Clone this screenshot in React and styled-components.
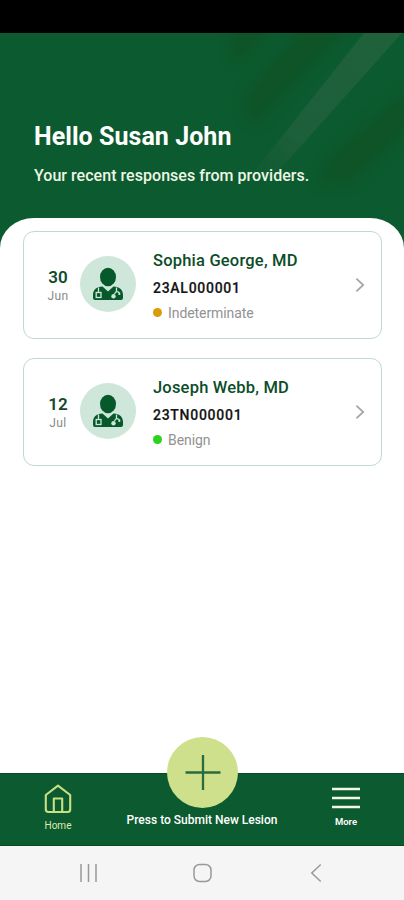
import React from "react";
import styled, { createGlobalStyle } from "styled-components";

const GlobalStyle = createGlobalStyle`
    * {
        box-sizing: border-box;
    }
    body {
        margin: 0;
        background: #fff;
        font-family: Roboto, "Liberation Sans", sans-serif;
    }
    p, h1, h2 {
        margin: 0;
    }
`;

const Screen = styled.div`
    display: flex;
    flex-direction: column;
    width: 404px;
    height: 900px;
    overflow: hidden;
    background: #0c5a2f;
`;

const StatusBar = styled.div`
    flex: none;
    height: 33px;
    background: #000;
`;

const Header = styled.header`
    position: relative;
    flex: none;
    height: 185px;
    padding: 89px 34px 0;
    color: #fff;
`;

const Streaks = styled.svg`
    position: absolute;
    top: 0;
    right: 0;
`;

const Greeting = styled.h1`
    position: relative;
    font-size: 25px;
    line-height: 30px;
    font-weight: 700;
    letter-spacing: 0.05px;
    white-space: nowrap;
`;

const Subtitle = styled.p`
    position: relative;
    margin-top: 14px;
    font-size: 16px;
    line-height: 20px;
    font-weight: 500;
    letter-spacing: 0.04px;
    color: #eef6e6;
    white-space: nowrap;
`;

const Content = styled.main`
    flex: 1;
    display: flex;
    flex-direction: column;
    gap: 19px;
    padding: 13px 22px 0 23px;
    background: #fff;
    border-radius: 34px 34px 0 0 / 30px 30px 0 0;
`;

const Card = styled.article`
    display: flex;
    align-items: center;
    height: 108px;
    padding: 0 16px 0 14px;
    border: 1.5px solid #bddbd0;
    border-radius: 11px;
`;

const DateBox = styled.div`
    width: 40px;
    margin-top: 2px;
    text-align: center;
`;

const Day = styled.p`
    font-size: 17px;
    line-height: 20px;
    font-weight: 600;
    color: #124a2c;
`;

const Month = styled.p`
    font-size: 12px;
    line-height: 19px;
    letter-spacing: 0.4px;
    color: #858a87;
`;

const Avatar = styled.div`
    display: flex;
    align-items: center;
    justify-content: center;
    width: 56px;
    height: 56px;
    margin: -2px 17px 0 2px;
    border-radius: 50%;
    background: #cfe6da;
`;

const Info = styled.div`
    flex: 1;
    margin-top: 2px;
    white-space: nowrap;
`;

const Name = styled.h2`
    font-size: 16.5px;
    line-height: 24px;
    font-weight: 500;
    letter-spacing: 0.2px;
    color: #0b4d28;
`;

const CaseId = styled.p`
    margin-top: 3px;
    font-size: 14px;
    line-height: 24px;
    font-weight: 500;
    letter-spacing: 0.72px;
    color: #151515;
    -webkit-text-stroke: 0.2px #151515;
`;

const Status = styled.p`
    display: flex;
    align-items: center;
    gap: 6px;
    margin-top: 2px;
    font-size: 14px;
    line-height: 22px;
    letter-spacing: -0.08px;
    color: #929292;

    &::before {
        content: "";
        width: 9px;
        height: 9px;
        margin-top: -1px;
        border-radius: 50%;
        background: ${(props) => props.$dot};
    }
`;

const TabBar = styled.nav`
    flex: none;
    display: grid;
    grid-template-columns: 116px 172px 116px;
    height: 73px;
    border-top: 1px solid #064a1f;
    border-bottom: 1px solid #064a1f;
    background: #0c5a2f;
`;

const Tab = styled.a`
    display: flex;
    flex-direction: column;
    align-items: center;
    padding-top: ${(props) => props.$top};
    font-size: ${(props) => props.$size};
    line-height: 14px;
    font-weight: ${(props) => props.$weight || 400};
    color: ${(props) => props.$color || "#fff"};
    white-space: nowrap;
`;

const TabLabel = styled.span`
    margin-top: 5px;
`;

const AddButton = styled.span`
    display: flex;
    align-items: center;
    justify-content: center;
    width: 71px;
    height: 71px;
    margin: -37px 0 5px 1px;
    border-radius: 50%;
    background: #cfe08c;
`;

const SystemBar = styled.footer`
    flex: none;
    display: grid;
    grid-template-columns: repeat(3, 114px);
    justify-content: center;
    justify-items: center;
    align-items: center;
    height: 54px;
    padding-bottom: 1px;
    background: #f5f5f5;
`;

const DoctorIcon = () => (
    <svg width="32" height="34" viewBox="0 0 32 34" fill="#06592b">
        <ellipse cx="16" cy="10" rx="8" ry="9.3" />
        <path d="M10.5 19.5 L16 24.5 L21.5 19.5 C28 20 31 23 31 28 V31 Q31 33 29 33 H3 Q1 33 1 31 V28 C1 23 4 20 10.5 19.5Z" />
        <path d="M6.5 20.5 V26 M24.5 20.5 V24.5 M22.5 27 Q24.5 22.5 28 26.5" fill="none" stroke="#cfe6da" strokeWidth="1.3" />
        <rect x="4.2" y="25.5" width="4.8" height="5" fill="none" stroke="#cfe6da" strokeWidth="1.3" />
        <circle cx="21.5" cy="29.3" r="2.2" fill="#cfe6da" />
        <circle cx="27.3" cy="27" r="1.1" fill="#cfe6da" />
    </svg>
);

const ChevronIcon = () => (
    <svg width="10" height="16" viewBox="0 0 10 16" fill="none" stroke="#a6a6a6" strokeWidth="1.8">
        <path d="M1.4 1.6 L8.2 8 L1.4 14.4" />
    </svg>
);

const HomeIcon = () => (
    <svg width="28" height="30" viewBox="0 0 28 30" fill="none" stroke="#c9df83" strokeWidth="2.1" strokeLinejoin="round">
        <path d="M1.8 11 L14 1.7 L26.2 11 V25.5 Q26.2 28 23.7 28 H4.3 Q1.8 28 1.8 25.5Z" />
        <path d="M9.8 28 V14.5 H18.2 V28" />
    </svg>
);

const MenuIcon = () => (
    <svg width="28" height="24" viewBox="0 0 28 24" stroke="#f3f6e6" strokeWidth="2.4">
        <path d="M0 3 H28 M0 12 H28 M0 21 H28" />
    </svg>
);

const PlusIcon = () => (
    <svg width="36" height="36" viewBox="0 0 36 36" stroke="#2b6b3b" strokeWidth="2.3">
        <path d="M18 0 V35 M0.5 17.5 H35.5" />
    </svg>
);

const responses = [
    { day: "30", month: "Jun", name: "Sophia George, MD", caseId: "23AL000001", status: "Indeterminate", dot: "#d99b0b" },
    { day: "12", month: "Jul", name: "Joseph Webb, MD", caseId: "23TN000001", status: "Benign", dot: "#2bd31d" },
];

const ResponseCard = ({ item }) => (
    <Card>
        <DateBox>
            <Day>{item.day}</Day>
            <Month>{item.month}</Month>
        </DateBox>
        <Avatar>
            <DoctorIcon />
        </Avatar>
        <Info>
            <Name>{item.name}</Name>
            <CaseId>{item.caseId}</CaseId>
            <Status $dot={item.dot}>{item.status}</Status>
        </Info>
        <ChevronIcon />
    </Card>
);

const App = () => {
    return (
        <Screen>
            <GlobalStyle />
            <StatusBar />
            <Header>
                <Streaks width="184" height="185" viewBox="0 0 184 185">
                    <defs>
                        <filter id="soft" x="-30%" y="-30%" width="160%" height="160%" colorInterpolationFilters="sRGB">
                            <feGaussianBlur stdDeviation="6" />
                        </filter>
                        <linearGradient id="beam" x1="1" y1="0" x2="0" y2="1">
                            <stop offset="0" stopColor="#1f613b" />
                            <stop offset="0.7" stopColor="#1c5f3a" />
                            <stop offset="1" stopColor="#0c5a2f" />
                        </linearGradient>
                    </defs>
                    <g fill="#0e5427" filter="url(#soft)">
                        <path d="M12 -8 H52 L22 28 L10 22Z" />
                        <path d="M84 -8 H130 L36 90 L26 82 V62Z" />
                        <path d="M194 52 V92 L128 150 H98 L110 124Z" />
                    </g>
                    <path d="M144 0 H182 L64 132 L50 142 L28 146Z" fill="url(#beam)" />
                </Streaks>
                <Greeting>Hello Susan John</Greeting>
                <Subtitle>Your recent responses from providers.</Subtitle>
            </Header>
            <Content>
                {responses.map((item) => (
                    <ResponseCard key={item.caseId} item={item} />
                ))}
            </Content>
            <TabBar>
                <Tab $top="10px" $size="10px" $color="#dcebae">
                    <HomeIcon />
                    <TabLabel>Home</TabLabel>
                </Tab>
                <Tab $top="0" $size="12px" $weight={500}>
                    <AddButton>
                        <PlusIcon />
                    </AddButton>
                    Press to Submit New Lesion
                </Tab>
                <Tab $top="12px" $size="9.5px" $weight={600}>
                    <MenuIcon />
                    <TabLabel>More</TabLabel>
                </Tab>
            </TabBar>
            <SystemBar>
                <svg width="18" height="18" viewBox="0 0 18 18" stroke="#999" strokeWidth="1.5">
                    <path d="M2 0 V18 M9.5 0 V18 M17 0 V18" />
                </svg>
                <svg width="20" height="20" viewBox="0 0 20 20" fill="none" stroke="#999" strokeWidth="1.5">
                    <rect x="2" y="1.5" width="17" height="17" rx="5.5" />
                </svg>
                <svg width="12" height="20" viewBox="0 0 12 20" fill="none" stroke="#999" strokeWidth="1.5">
                    <path d="M10.7 1.5 L1.8 10 L10.7 18.5" />
                </svg>
            </SystemBar>
        </Screen>
    );
};

export default App;
